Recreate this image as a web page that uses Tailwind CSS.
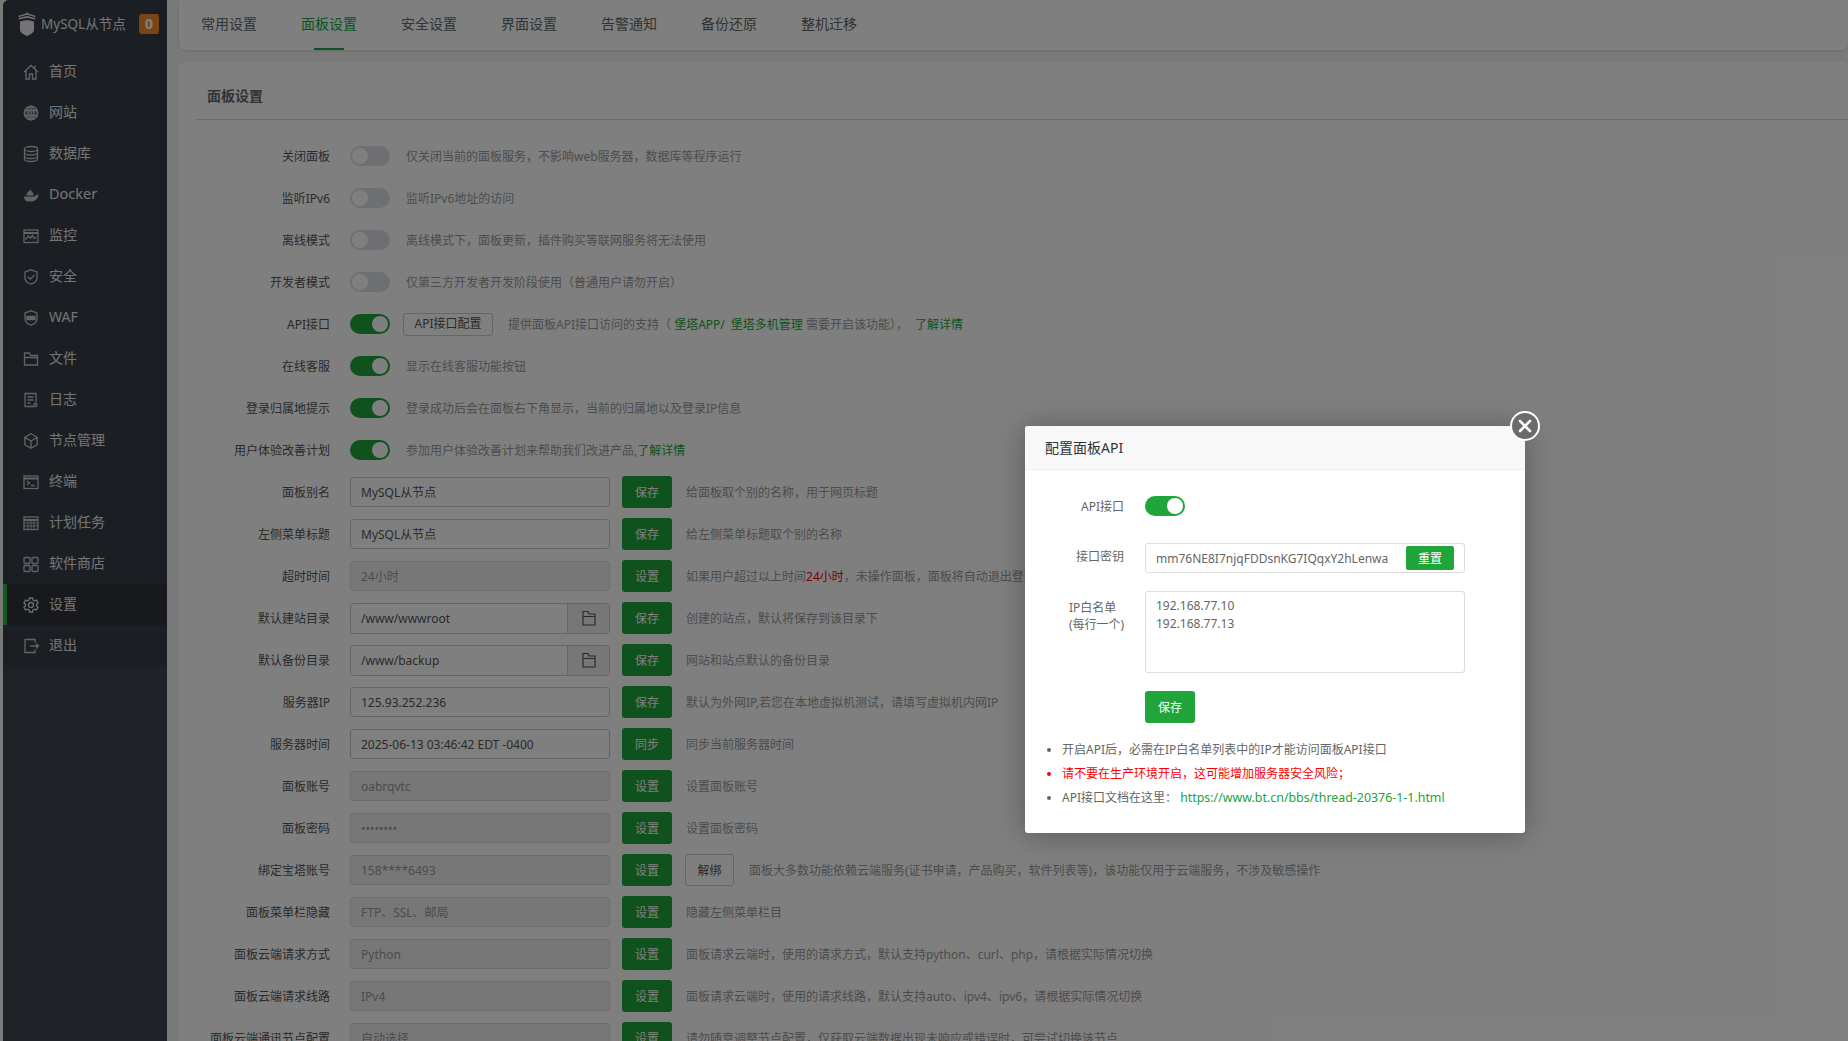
<!DOCTYPE html>
<html lang="zh-CN">
<head>
  <meta charset="UTF-8" />
  <title>面板设置</title>
  <script src="https://cdn.jsdelivr.net/npm/@tailwindcss/browser@4"></script>
</head>
<body class="relative h-screen overflow-hidden bg-[#f3f3f3] text-xs text-[#555] font-['Noto_Sans','Noto_Sans_CJK_SC',sans-serif]">
<div class="flex h-screen pl-[3px]">

  <!-- sidebar -->
  <aside class="w-[164px] shrink-0 bg-[#3c444d] rounded-tl-md text-[14px] text-[#e8e8e8]">
    <div class="flex items-center h-[51px] pl-[14px] pb-[3px] bg-[#373e47] rounded-tl-md">
      <svg class="w-[20px] h-[24px] mr-[4px]" viewBox="0 0 20 24" fill="#e8e8e8"><path d="M10 0l1 1.500 8 2.500-.8 1L11 3h-2L1.800 5 1 4l8-2.500z"/><path d="M2 6l8-2 8 2 .8 1.500-8.800-1.700-8.800 1.700z"/><path d="M3 9.500l7-1.500 7 1.500V18c0 2.500-3.500 4.500-7 6-3.500-1.500-7-3.500-7-6z"/></svg>
      <span class="text-[13.500px] w-[98px] whitespace-nowrap">MySQL从节点</span>
      <span class="w-[20px] h-[20px] rounded-[3px] bg-[#f5892f] text-white font-bold text-[14px] flex items-center justify-center">0</span>
    </div>
    <nav class="bg-[#373e47]">
      <a class="flex items-center h-[41px] pl-[19px]"><svg class="w-[18px] h-[18px] mr-[9px] text-[#c2c6ca]" viewBox="0 0 18 18" fill="none" stroke="currentColor" stroke-width="1.300"><path d="M2 9l7-6.500L16 9M4 7.500V16h3.500v-5h3v5H14V7.500M13 2.500v2.500"/></svg>首页</a>
      <a class="flex items-center h-[41px] pl-[19px]"><svg class="w-[18px] h-[18px] mr-[9px] text-[#c2c6ca]" viewBox="0 0 18 18" fill="none" stroke="currentColor" stroke-width="1.300"><circle cx="9" cy="9" r="6.800" fill="currentColor" fill-opacity=".35"/><ellipse cx="9" cy="9" rx="3" ry="6.800"/><path d="M2.500 6.500h13M2.500 11.500h13M9 2v14"/></svg>网站</a>
      <a class="flex items-center h-[41px] pl-[19px]"><svg class="w-[18px] h-[18px] mr-[9px] text-[#c2c6ca]" viewBox="0 0 18 18" fill="none" stroke="currentColor" stroke-width="1.300"><ellipse cx="9" cy="4" rx="6.500" ry="2.500"/><path d="M2.500 4v10c0 1.400 3 2.500 6.500 2.500s6.500-1.100 6.500-2.500V4M2.500 7.500C2.500 9 5.500 10 9 10s6.500-1 6.500-2.500M2.500 11c0 1.500 3 2.500 6.500 2.500s6.500-1 6.500-2.500"/></svg>数据库</a>
      <a class="flex items-center h-[41px] pl-[19px]"><svg class="w-[18px] h-[18px] mr-[9px] text-[#c2c6ca]" viewBox="0 0 18 18" fill="currentColor"><path d="M2 10.500h11c.6-1.500 1.500-2 3.500-2-.3 4-3 7-7.500 7H6.500c-3 0-4.500-2-4.500-5zM4.500 9.500c0-2.500 1.300-4 3-4.500l.5-2.500 1 2.500c1.500.3 2.500 2 2.500 4.500z"/></svg><span class="text-[14.500px] -mt-[2px]">Docker</span></a>
      <a class="flex items-center h-[41px] pl-[19px]"><svg class="w-[18px] h-[18px] mr-[9px] text-[#c2c6ca]" viewBox="0 0 18 18" fill="none" stroke="currentColor" stroke-width="1.300"><rect x="2" y="3" width="14" height="12.500"/><path d="M2 6h14" stroke-width="2"/><path d="M3.500 12.500l3-3.500 2 2 2-2.500 1.500 3 2.500-1.500"/></svg>监控</a>
      <a class="flex items-center h-[41px] pl-[19px]"><svg class="w-[18px] h-[18px] mr-[9px] text-[#c2c6ca]" viewBox="0 0 18 18" fill="none" stroke="currentColor" stroke-width="1.300"><path d="M9 1.800l6 2.200v5.500c0 3.500-3 5.700-6 6.700-3-1-6-3.200-6-6.700V4z"/><path d="M6 8.800l2.300 2.300L12.500 7"/></svg>安全</a>
      <a class="flex items-center h-[41px] pl-[19px]"><svg class="w-[18px] h-[18px] mr-[9px] text-[#c2c6ca]" viewBox="0 0 18 18" fill="none" stroke="currentColor" stroke-width="1.300"><path d="M9 1.800l6 2.200v5.500c0 3.500-3 5.700-6 6.700-3-1-6-3.200-6-6.700V4z"/><path d="M5 7.500h8v3H5z" fill="currentColor"/></svg>WAF</a>
      <a class="flex items-center h-[41px] pl-[19px]"><svg class="w-[18px] h-[18px] mr-[9px] text-[#c2c6ca]" viewBox="0 0 18 18" fill="none" stroke="currentColor" stroke-width="1.300"><path d="M2.500 15V3h5l1 2.500h7V15zM2.500 7.500h13"/></svg>文件</a>
      <a class="flex items-center h-[41px] pl-[19px]"><svg class="w-[18px] h-[18px] mr-[9px] text-[#c2c6ca]" viewBox="0 0 18 18" fill="none" stroke="currentColor" stroke-width="1.300"><path d="M12 15.500H3v-13h11v9M5.500 6h6M5.500 9h6M5.500 12h3"/><circle cx="13.500" cy="14" r="1.500"/></svg>日志</a>
      <a class="flex items-center h-[41px] pl-[19px]"><svg class="w-[18px] h-[18px] mr-[9px] text-[#c2c6ca]" viewBox="0 0 18 18" fill="none" stroke="currentColor" stroke-width="1.300"><path d="M9 1.800l6.200 3.500v7.400L9 16.200l-6.200-3.500V5.300zM2.800 5.300L9 9l6.200-3.700M9 9v7.200"/></svg>节点管理</a>
      <a class="flex items-center h-[41px] pl-[19px]"><svg class="w-[18px] h-[18px] mr-[9px] text-[#c2c6ca]" viewBox="0 0 18 18" fill="none" stroke="currentColor" stroke-width="1.300"><rect x="2" y="3" width="14" height="12.500"/><path d="M2 5.500h14" stroke-width="2"/><path d="M5 8l2.500 2L5 12M9 12.500h3.500"/></svg>终端</a>
      <a class="flex items-center h-[41px] pl-[19px]"><svg class="w-[18px] h-[18px] mr-[9px] text-[#c2c6ca]" viewBox="0 0 18 18" fill="none" stroke="currentColor" stroke-width="1.300"><rect x="2" y="3" width="14" height="12.500"/><path d="M2 6h14" stroke-width="2"/><path d="M2 9h14M2 12h14M6 6v9.500M9 6v9.500M12 6v9.500" stroke-width=".9"/></svg>计划任务</a>
      <a class="flex items-center h-[41px] pl-[19px]"><svg class="w-[18px] h-[18px] mr-[9px] text-[#c2c6ca]" viewBox="0 0 18 18" fill="none" stroke="currentColor" stroke-width="1.300"><rect x="2" y="2.500" width="6" height="6" rx="1"/><rect x="10" y="2.500" width="6" height="6" rx="1"/><rect x="2" y="10.500" width="6" height="6" rx="1"/><rect x="10" y="10.500" width="6" height="6" rx="1"/></svg>软件商店</a>
      <a class="flex items-center h-[41px] pl-[15px] border-l-4 border-[#26b043] bg-[#303238]"><svg class="w-[18px] h-[18px] mr-[9px] text-[#d8dadc]" viewBox="0 0 18 18" fill="none" stroke="currentColor" stroke-width="1.300"><path d="M7.500 2h3l.5 2 1.500.8 2-.7 1.500 2.700-1.500 1.400v1.600l1.500 1.400-1.500 2.700-2-.7-1.500.8-.5 2h-3l-.5-2-1.500-.8-2 .7L2 11.200l1.500-1.400V8.200L2 6.800l1.500-2.700 2 .7L7 4z"/><circle cx="9" cy="9" r="2.500"/></svg>设置</a>
      <a class="flex items-center h-[41px] pl-[19px]"><svg class="w-[18px] h-[18px] mr-[9px] text-[#c2c6ca]" viewBox="0 0 18 18" fill="none" stroke="currentColor" stroke-width="1.300"><path d="M13 5.500V2.500H3v13h10v-3M8 9h8.500M14 6.500L16.500 9 14 11.500"/></svg>退出</a>
    </nav>
  </aside>

  <main class="flex-1 min-w-0 ml-[12px]">
    <!-- tabs -->
    <div class="flex h-[50px] bg-white rounded-b-md shadow-sm text-[14px] text-[#666]">
      <a class="w-[100px] text-center leading-[48px]">常用设置</a>
      <a class="relative w-[100px] text-center leading-[48px] text-[#20a53a]">面板设置<span class="absolute left-[35px] bottom-0 w-[30px] h-[2px] bg-[#20a53a]"></span></a>
      <a class="w-[100px] text-center leading-[48px]">安全设置</a>
      <a class="w-[100px] text-center leading-[48px]">界面设置</a>
      <a class="w-[100px] text-center leading-[48px]">告警通知</a>
      <a class="w-[100px] text-center leading-[48px]">备份还原</a>
      <a class="w-[100px] text-center leading-[48px]">整机迁移</a>
    </div>

    <!-- settings card -->
    <section class="mt-[12px] bg-white rounded-t-md h-[1000px]">
      <div class="ml-[16px] pl-[12px] pt-[12px] h-[58px] flex items-center border-b border-[#ddd] text-[14px] font-bold text-[#666]">面板设置</div>

      <div class="pt-[15px]">
        <div class="flex items-center h-[42px]">
          <label class="w-[151px] mr-[20px] pt-[2px] text-right">关闭面板</label>
          <span class="flex items-center w-[40px] h-[20px] p-[2px] rounded-full bg-[#dcdfe6]"><i class="w-[16px] h-[16px] rounded-full bg-white"></i></span>
          <p class="ml-[16px] pt-[2px] text-[#999]">仅关闭当前的面板服务，不影响web服务器，数据库等程序运行</p>
        </div>
        <div class="flex items-center h-[42px]">
          <label class="w-[151px] mr-[20px] pt-[2px] text-right">监听IPv6</label>
          <span class="flex items-center w-[40px] h-[20px] p-[2px] rounded-full bg-[#dcdfe6]"><i class="w-[16px] h-[16px] rounded-full bg-white"></i></span>
          <p class="ml-[16px] pt-[2px] text-[#999]">监听IPv6地址的访问</p>
        </div>
        <div class="flex items-center h-[42px]">
          <label class="w-[151px] mr-[20px] pt-[2px] text-right">离线模式</label>
          <span class="flex items-center w-[40px] h-[20px] p-[2px] rounded-full bg-[#dcdfe6]"><i class="w-[16px] h-[16px] rounded-full bg-white"></i></span>
          <p class="ml-[16px] pt-[2px] text-[#999]">离线模式下，面板更新，插件购买等联网服务将无法使用</p>
        </div>
        <div class="flex items-center h-[42px]">
          <label class="w-[151px] mr-[20px] pt-[2px] text-right">开发者模式</label>
          <span class="flex items-center w-[40px] h-[20px] p-[2px] rounded-full bg-[#dcdfe6]"><i class="w-[16px] h-[16px] rounded-full bg-white"></i></span>
          <p class="ml-[16px] pt-[2px] text-[#999]">仅第三方开发者开发阶段使用（普通用户请勿开启）</p>
        </div>
        <div class="flex items-center h-[42px]">
          <label class="w-[151px] mr-[20px] pt-[2px] text-right">API接口</label>
          <span class="flex items-center justify-end w-[40px] h-[20px] p-[2px] rounded-full bg-[#20a53a]"><i class="w-[16px] h-[16px] rounded-full bg-white"></i></span>
          <button class="ml-[13px] w-[90px] h-[23px] border border-[#ccc] rounded-[3px] text-[#555]">API接口配置</button>
          <p class="ml-[15px] pt-[2px] text-[#999]">提供面板API接口访问的支持（ <a class="text-[#20a53a]">堡塔APP/</a><a class="ml-[6px] text-[#20a53a]">堡塔多机管理</a> 需要开启该功能），<a class="ml-[7px] text-[#20a53a]">了解详情</a></p>
        </div>
        <div class="flex items-center h-[42px]">
          <label class="w-[151px] mr-[20px] pt-[2px] text-right">在线客服</label>
          <span class="flex items-center justify-end w-[40px] h-[20px] p-[2px] rounded-full bg-[#20a53a]"><i class="w-[16px] h-[16px] rounded-full bg-white"></i></span>
          <p class="ml-[16px] pt-[2px] text-[#999]">显示在线客服功能按钮</p>
        </div>
        <div class="flex items-center h-[42px]">
          <label class="w-[151px] mr-[20px] pt-[2px] text-right">登录归属地提示</label>
          <span class="flex items-center justify-end w-[40px] h-[20px] p-[2px] rounded-full bg-[#20a53a]"><i class="w-[16px] h-[16px] rounded-full bg-white"></i></span>
          <p class="ml-[16px] pt-[2px] text-[#999]">登录成功后会在面板右下角显示，当前的归属地以及登录IP信息</p>
        </div>
        <div class="flex items-center h-[42px]">
          <label class="w-[151px] mr-[20px] pt-[2px] text-right">用户体验改善计划</label>
          <span class="flex items-center justify-end w-[40px] h-[20px] p-[2px] rounded-full bg-[#20a53a]"><i class="w-[16px] h-[16px] rounded-full bg-white"></i></span>
          <p class="ml-[16px] pt-[2px] text-[#999]">参加用户体验改善计划来帮助我们改进产品,<a class="text-[#20a53a]">了解详情</a></p>
        </div>

        <div class="flex items-center h-[42px]">
          <label class="w-[151px] mr-[20px] pt-[2px] text-right">面板别名</label>
          <div class="w-[260px] h-[30px] leading-[30px] px-[10px] border border-[#ccc] rounded-[3px]">MySQL从节点</div>
          <button class="ml-[12px] w-[50px] h-[32px] pt-[2px] rounded-[3px] bg-[#20a53a] text-white">保存</button>
          <p class="ml-[14px] pt-[2px] text-[#999] whitespace-nowrap">给面板取个别的名称，用于网页标题</p>
        </div>
        <div class="flex items-center h-[42px]">
          <label class="w-[151px] mr-[20px] pt-[2px] text-right">左侧菜单标题</label>
          <div class="w-[260px] h-[30px] leading-[30px] px-[10px] border border-[#ccc] rounded-[3px]">MySQL从节点</div>
          <button class="ml-[12px] w-[50px] h-[32px] pt-[2px] rounded-[3px] bg-[#20a53a] text-white">保存</button>
          <p class="ml-[14px] pt-[2px] text-[#999] whitespace-nowrap">给左侧菜单标题取个别的名称</p>
        </div>
        <div class="flex items-center h-[42px]">
          <label class="w-[151px] mr-[20px] pt-[2px] text-right">超时时间</label>
          <div class="w-[260px] h-[30px] leading-[30px] px-[10px] border border-[#ddd] rounded-[3px] bg-[#eee] text-[#999]">24小时</div>
          <button class="ml-[12px] w-[50px] h-[32px] pt-[2px] rounded-[3px] bg-[#20a53a] text-white">设置</button>
          <p class="ml-[14px] pt-[2px] text-[#999] whitespace-nowrap">如果用户超过以上时间<span class="text-[#f00]">24小时</span>，未操作面板，面板将自动退出登录</p>
        </div>
        <div class="flex items-center h-[42px]">
          <label class="w-[151px] mr-[20px] pt-[2px] text-right">默认建站目录</label>
          <div class="flex w-[260px] h-[31px] border border-[#ccc] rounded-[3px]">
            <span class="flex-1 leading-[29px] px-[10px]">/www/wwwroot</span>
            <span class="flex items-center justify-center w-[42px] border-l border-[#ccc] bg-[#eee]"><svg class="w-[14px] h-[16px]" viewBox="0 0 14 16" fill="none" stroke="#555" stroke-width="1.200"><path d="M1 15V1.500h5l1 2.500h6v11zM1 6.500h12"/></svg></span>
          </div>
          <button class="ml-[12px] w-[50px] h-[32px] pt-[2px] rounded-[3px] bg-[#20a53a] text-white">保存</button>
          <p class="ml-[14px] pt-[2px] text-[#999] whitespace-nowrap">创建的站点，默认将保存到该目录下</p>
        </div>
        <div class="flex items-center h-[42px]">
          <label class="w-[151px] mr-[20px] pt-[2px] text-right">默认备份目录</label>
          <div class="flex w-[260px] h-[31px] border border-[#ccc] rounded-[3px]">
            <span class="flex-1 leading-[29px] px-[10px]">/www/backup</span>
            <span class="flex items-center justify-center w-[42px] border-l border-[#ccc] bg-[#eee]"><svg class="w-[14px] h-[16px]" viewBox="0 0 14 16" fill="none" stroke="#555" stroke-width="1.200"><path d="M1 15V1.500h5l1 2.500h6v11zM1 6.500h12"/></svg></span>
          </div>
          <button class="ml-[12px] w-[50px] h-[32px] pt-[2px] rounded-[3px] bg-[#20a53a] text-white">保存</button>
          <p class="ml-[14px] pt-[2px] text-[#999] whitespace-nowrap">网站和站点默认的备份目录</p>
        </div>
        <div class="flex items-center h-[42px]">
          <label class="w-[151px] mr-[20px] pt-[2px] text-right">服务器IP</label>
          <div class="w-[260px] h-[30px] leading-[30px] px-[10px] border border-[#ccc] rounded-[3px]">125.93.252.236</div>
          <button class="ml-[12px] w-[50px] h-[32px] pt-[2px] rounded-[3px] bg-[#20a53a] text-white">保存</button>
          <p class="ml-[14px] pt-[2px] text-[#999] whitespace-nowrap">默认为外网IP,若您在本地虚拟机测试，请填写虚拟机内网IP</p>
        </div>
        <div class="flex items-center h-[42px]">
          <label class="w-[151px] mr-[20px] pt-[2px] text-right">服务器时间</label>
          <div class="w-[260px] h-[30px] leading-[30px] px-[10px] border border-[#ccc] rounded-[3px]">2025-06-13 03:46:42 EDT -0400</div>
          <button class="ml-[12px] w-[50px] h-[32px] pt-[2px] rounded-[3px] bg-[#20a53a] text-white">同步</button>
          <p class="ml-[14px] pt-[2px] text-[#999] whitespace-nowrap">同步当前服务器时间</p>
        </div>
        <div class="flex items-center h-[42px]">
          <label class="w-[151px] mr-[20px] pt-[2px] text-right">面板账号</label>
          <div class="w-[260px] h-[30px] leading-[30px] px-[10px] border border-[#ddd] rounded-[3px] bg-[#eee] text-[#999]">oabrqvtc</div>
          <button class="ml-[12px] w-[50px] h-[32px] pt-[2px] rounded-[3px] bg-[#20a53a] text-white">设置</button>
          <p class="ml-[14px] pt-[2px] text-[#999] whitespace-nowrap">设置面板账号</p>
        </div>
        <div class="flex items-center h-[42px]">
          <label class="w-[151px] mr-[20px] pt-[2px] text-right">面板密码</label>
          <div class="w-[260px] h-[30px] leading-[30px] px-[10px] border border-[#ddd] rounded-[3px] bg-[#eee] text-[#999]">••••••••</div>
          <button class="ml-[12px] w-[50px] h-[32px] pt-[2px] rounded-[3px] bg-[#20a53a] text-white">设置</button>
          <p class="ml-[14px] pt-[2px] text-[#999] whitespace-nowrap">设置面板密码</p>
        </div>
        <div class="flex items-center h-[42px]">
          <label class="w-[151px] mr-[20px] pt-[2px] text-right">绑定宝塔账号</label>
          <div class="w-[260px] h-[30px] leading-[30px] px-[10px] border border-[#ddd] rounded-[3px] bg-[#eee] text-[#999]">158****6493</div>
          <button class="ml-[12px] w-[50px] h-[32px] pt-[2px] rounded-[3px] bg-[#20a53a] text-white">设置</button>
          <button class="ml-[13px] w-[49px] h-[32px] pt-[2px] rounded-[3px] border border-[#ccc]">解绑</button>
          <p class="ml-[15px] pt-[2px] text-[#999] whitespace-nowrap">面板大多数功能依赖云端服务(证书申请，产品购买，软件列表等)，该功能仅用于云端服务，不涉及敏感操作</p>
        </div>
        <div class="flex items-center h-[42px]">
          <label class="w-[151px] mr-[20px] pt-[2px] text-right">面板菜单栏隐藏</label>
          <div class="w-[260px] h-[30px] leading-[30px] px-[10px] border border-[#ddd] rounded-[3px] bg-[#eee] text-[#999]">FTP、SSL、邮局</div>
          <button class="ml-[12px] w-[50px] h-[32px] pt-[2px] rounded-[3px] bg-[#20a53a] text-white">设置</button>
          <p class="ml-[14px] pt-[2px] text-[#999] whitespace-nowrap">隐藏左侧菜单栏目</p>
        </div>
        <div class="flex items-center h-[42px]">
          <label class="w-[151px] mr-[20px] pt-[2px] text-right">面板云端请求方式</label>
          <div class="w-[260px] h-[30px] leading-[30px] px-[10px] border border-[#ddd] rounded-[3px] bg-[#eee] text-[#999]">Python</div>
          <button class="ml-[12px] w-[50px] h-[32px] pt-[2px] rounded-[3px] bg-[#20a53a] text-white">设置</button>
          <p class="ml-[14px] pt-[2px] text-[#999] whitespace-nowrap">面板请求云端时，使用的请求方式，默认支持python、curl、php，请根据实际情况切换</p>
        </div>
        <div class="flex items-center h-[42px]">
          <label class="w-[151px] mr-[20px] pt-[2px] text-right">面板云端请求线路</label>
          <div class="w-[260px] h-[30px] leading-[30px] px-[10px] border border-[#ddd] rounded-[3px] bg-[#eee] text-[#999]">IPv4</div>
          <button class="ml-[12px] w-[50px] h-[32px] pt-[2px] rounded-[3px] bg-[#20a53a] text-white">设置</button>
          <p class="ml-[14px] pt-[2px] text-[#999] whitespace-nowrap">面板请求云端时，使用的请求线路，默认支持auto、ipv4、ipv6，请根据实际情况切换</p>
        </div>
        <div class="flex items-center h-[42px]">
          <label class="w-[151px] mr-[20px] pt-[2px] text-right">面板云端通讯节点配置</label>
          <div class="w-[260px] h-[30px] leading-[30px] px-[10px] border border-[#ddd] rounded-[3px] bg-[#eee] text-[#999]">自动选择</div>
          <button class="ml-[12px] w-[50px] h-[32px] pt-[2px] rounded-[3px] bg-[#20a53a] text-white">设置</button>
          <p class="ml-[14px] pt-[2px] text-[#999] whitespace-nowrap">请勿随意调整节点配置，仅获取云端数据出现未响应或错误时，可尝试切换该节点</p>
        </div>
      </div>
    </section>
  </main>
</div>

<!-- shade -->
<div class="absolute inset-0 bg-black/50"></div>

<!-- modal -->
<div class="absolute left-[1025px] top-[426px] w-[500px] h-[407px] rounded-[3px] bg-white shadow-[0_2px_30px_rgba(0,0,0,0.3)]">
  <div class="h-[44px] pl-[20px] leading-[43px] text-[14px] text-[#333] bg-[#f8f8f8] border-b border-[#eee] rounded-t-[3px]">配置面板API</div>

  <div class="flex items-center mt-[26px] h-[20px]">
    <label class="w-[99px] pt-[2px] text-right text-[#666]">API接口</label>
    <span class="flex items-center justify-end ml-[21px] w-[40px] h-[20px] p-[2px] rounded-full bg-[#20a53a]"><i class="w-[16px] h-[16px] rounded-full bg-white"></i></span>
  </div>

  <div class="flex items-center mt-[27px]">
    <label class="w-[99px] text-right text-[#666] -mt-[2px]">接口密钥</label>
    <div class="flex items-center justify-between ml-[21px] w-[320px] h-[30px] pl-[10px] pr-[10px] border border-[#ddd] rounded-[3px] text-[#666]">
      <span class="pt-[2px]">mm76NE8I7njqFDDsnKG7IQqxY2hLenwa</span>
      <button class="w-[48px] h-[24px] pt-[1px] rounded-[2px] bg-[#20a53a] text-white">重置</button>
    </div>
  </div>

  <div class="flex mt-[18px]">
    <label class="w-[99px] pl-[44px] pt-[8px] leading-[17px] text-[#666] whitespace-nowrap">IP白名单<br />(每行一个)</label>
    <div class="ml-[21px] w-[320px] h-[82px] pt-[5px] pl-[10px] leading-[18px] border border-[#ddd] rounded-[3px] text-[#666]">192.168.77.10<br />192.168.77.13</div>
  </div>

  <button class="block ml-[120px] mt-[18px] w-[50px] h-[32px] pt-[2px] rounded-[3px] bg-[#20a53a] text-white">保存</button>

  <ul class="mt-[15px] ml-[37px] leading-[24px] list-disc text-[#666]">
    <li>开启API后，必需在IP白名单列表中的IP才能访问面板API接口</li>
    <li class="text-[#f00]">请不要在生产环境开启，这可能增加服务器安全风险；</li>
    <li>API接口文档在这里： <a class="text-[12.400px] text-[#20a53a]">https://www.bt.cn/bbs/thread-20376-1-1.html</a></li>
  </ul>

  <button class="absolute -right-[15px] -top-[15px] flex items-center justify-center w-[30px] h-[30px] rounded-full bg-[#6b6b6b] border-2 border-white">
    <svg class="w-[14px] h-[14px]" viewBox="0 0 14 14" stroke="#fff" stroke-width="2.600" stroke-linecap="round"><path d="M2 2l10 10M12 2L2 12"/></svg>
  </button>
</div>
</body>
</html>
